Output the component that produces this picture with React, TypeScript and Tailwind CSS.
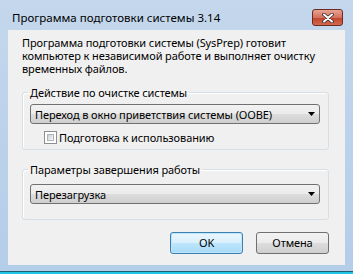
const btn =
  'bg-[linear-gradient(#f2f2f2,#ebebeb_50%,#dddddd_50%,#cfcfcf)] border border-[#707070] rounded-[3px]';

function Combo({ text }: { text: string }) {
  return (
    <div className={`h-[20px] flex items-center pl-[4px] pr-[4px] ${btn}`}>
      <span className="flex-1 leading-none">{text}</span>
      <svg width="7" height="4" viewBox="0 0 7 4">
        <path d="M0 0h7L3.5 4z" fill="#000" />
      </svg>
    </div>
  );
}

export default function App() {
  return (
    <div className="w-[353px] h-[274px] overflow-hidden bg-[linear-gradient(#c4d7ec,#b4cde8)] flex flex-col font-['Noto_Sans',sans-serif] text-[11px] tracking-[-0.1px] text-black">
      <div className="h-[30px] flex items-start pt-[9px] pl-[12px] pr-[10px]">
        <div className="flex-1 h-[17px] flex items-center text-[11.5px] tracking-normal">
          Программа подготовки системы 3.14
        </div>
        <div className="w-[31px] h-[17px] rounded-[3px] border border-[#6b2a22] bg-[linear-gradient(#e8a493,#d4715d_50%,#c2432c_51%,#d16a4f)] flex items-center justify-center">
          <svg width="12" height="10" viewBox="0 0 12 10">
            <path d="M2 1.5l8 7M10 1.5l-8 7" stroke="#3c2a2a" strokeWidth="3.6" strokeLinecap="round" />
            <path d="M2 1.5l8 7M10 1.5l-8 7" stroke="#fff" strokeWidth="2" strokeLinecap="round" />
          </svg>
        </div>
      </div>
      <div className="mx-[8px] h-[235px] bg-[#f0f0f0] flex flex-col">
        <p className="pl-[14px] pt-[6px] leading-[13px] whitespace-nowrap">
          Программа подготовки системы (SysPrep) готовит
          <br />
          компьютер к независимой работе и выполняет очистку
          <br />
          временных файлов.
        </p>
        <fieldset className="mt-[10px] ml-[14px] mr-[16px] border border-[#d5dfe5] rounded-[3px] pl-[7px] pr-[8px] pb-[4px] shadow-[inset_1px_1px_0_#fff]">
          <legend className="px-[2px] -ml-[2px] leading-[15px]">Действие по очистке системы</legend>
          <div className="mt-[4px]">
            <Combo text="Переход в окно приветствия системы (OOBE)" />
          </div>
          <label className="mt-[6px] ml-[14px] flex items-center gap-[2px]">
            <span className="w-[13px] h-[13px] border border-[#8e8f8f] bg-white p-[2px]">
              <span className="block w-full h-full bg-[linear-gradient(135deg,#cbcfd5,#f6f6f6)] border border-[#aeb3b9]" />
            </span>
            <span className="leading-[15px]">Подготовка к использованию</span>
          </label>
        </fieldset>
        <fieldset className="mt-[12px] ml-[14px] mr-[16px] border border-[#d5dfe5] rounded-[3px] pl-[7px] pr-[8px] pb-[15px] shadow-[inset_1px_1px_0_#fff]">
          <legend className="px-[2px] -ml-[2px] leading-[15px]">Параметры завершения работы</legend>
          <div className="mt-[7px]">
            <Combo text="Перезагрузка" />
          </div>
        </fieldset>
        <div className="mt-[12px] mr-[16px] flex justify-end gap-[13px]">
          <button className="w-[73px] h-[22px] rounded-[3px] border border-[#3c7fb1] bg-[linear-gradient(#eaf6fd,#d9f0fc_50%,#bee6fd_50%,#a7d9f5)] shadow-[inset_0_0_0_1px_#bde6fb]">
            OK
          </button>
          <button className={`w-[73px] h-[22px] ${btn}`}>Отмена</button>
        </div>
      </div>
      <div className="flex-1" />
      <div className="h-[1px] bg-[#1f5d73]" />
      <div className="h-[2px] bg-[#1ec3e6]" />
    </div>
  );
}
